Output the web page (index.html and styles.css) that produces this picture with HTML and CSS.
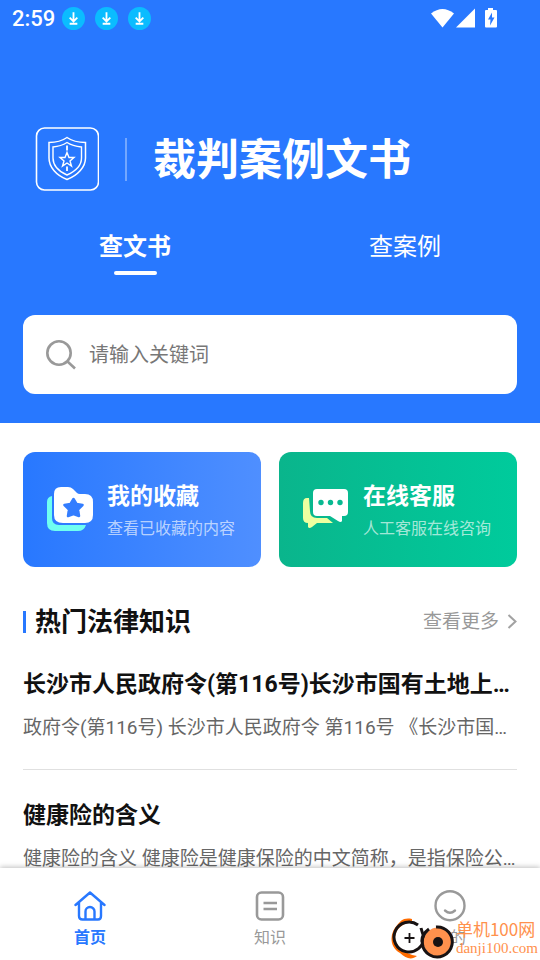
FILE: index.html
```html
<!DOCTYPE html>
<html lang="zh-CN">
<head>
<meta charset="utf-8">
<meta name="viewport" content="width=device-width, initial-scale=1">
<title>裁判案例文书</title>
<link rel="stylesheet" href="styles.css">
</head>
<body>
<svg class="defs" aria-hidden="true">
  <symbol id="download" viewBox="0 0 24 24">
    <circle cx="12" cy="12" r="12" fill="#0bbcff"/>
    <path d="M12 5.500v9M8 11l4 4 4-4M8 17.500h8" fill="none" stroke="#fff" stroke-width="1.900"/>
  </symbol>
</svg>
<header class="hero">
  <div class="status">
    <span class="clock">2:59</span>
    <svg class="dl" aria-hidden="true"><use href="#download"/></svg>
    <svg class="dl" aria-hidden="true"><use href="#download"/></svg>
    <svg class="dl" aria-hidden="true"><use href="#download"/></svg>
    <svg class="signals" viewBox="0 0 68 22" aria-hidden="true">
      <path d="M0 5.500Q11.500-3.500 23 5.500L11.500 19.500Z" fill="#fff"/>
      <path d="M44 .5v19H25Z" fill="#fff"/>
      <path fill-rule="evenodd" d="M57 0h5v2h3a1 1 0 0 1 1 1v15.500a1 1 0 0 1-1 1H55a1 1 0 0 1-1-1V3a1 1 0 0 1 1-1h2zM61 4.500l-4 7h2.500l-.500 6 4.500-8h-2.500z" fill="#fff"/>
    </svg>
  </div>
  <div class="brand">
    <svg class="logo" viewBox="0 0 64 64" fill="none" stroke="#fff" aria-hidden="true">
      <rect x="1.500" y="1" width="62" height="62" rx="8" stroke-width="1.600"/>
      <path d="M32 10.500C27 14 20 15.500 14 15.500V31C14 40 21 48 32 52.500 43 48 50.500 40 50.500 31V15.500C44 15.500 37 14 32 10.500Z" stroke-width="1.500"/>
      <path d="M32 15.500C28 18 23 19.500 18 20V31C18 38 23 44 32 48 41 44 46.500 38 46.500 31V20C42 19.500 36 18 32 15.500Z" stroke-width="1.400"/>
      <path d="M32 18.500v5M32 39.500v4.500" stroke-width="1.800"/>
      <path d="M32 25.500l2 5h5l-4 3.500 1.500 5L32 36 27.500 39 29 34 25 30.500h5z" stroke-width="1.400"/>
    </svg>
    <span class="rule"></span>
    <h1>裁判案例文书</h1>
  </div>
  <div class="tabs" role="tablist">
    <button class="tab active" role="tab" aria-selected="true">查文书</button>
    <button class="tab" role="tab" aria-selected="false">查案例</button>
  </div>
  <label class="search">
    <svg viewBox="0 0 30 30" aria-hidden="true"><g fill="none" stroke="#999" stroke-width="2.600"><circle cx="13" cy="13" r="11.700"/><path d="M21 21l8 7.500"/></g></svg>
    <input type="search" placeholder="请输入关键词" aria-label="请输入关键词">
  </label>
</header>
<main>
  <div class="cards">
    <a class="card favorites" href="#favorites">
      <svg viewBox="0 0 48 48" aria-hidden="true">
        <path d="M6 10Q1 11 1 16V37Q1 45 9 45H32Q38 45 40 39H13Q6 39 6 32Z" fill="#6ffff1"/>
        <path d="M15 1H22Q25 1 27 3L31 7Q32 8 34 8H39Q47 8 47 16V29Q47 37 39 37H17Q8 37 8 29V8Q8 1 15 1Z" fill="#fff"/>
        <path d="M27.500 13l3 5 6 1-4.500 4.500 1 6.500-5.500-2-5.500 2 1-6.500-4.500-4.500 6-1z" fill="#337dff" stroke="#337dff" stroke-width="2.500" stroke-linejoin="round"/>
      </svg>
      <span class="card-text"><strong>我的收藏</strong><small>查看已收藏的内容</small></span>
    </a>
    <a class="card support" href="#support">
      <svg viewBox="0 0 48 48" aria-hidden="true">
        <path d="M7 12H5Q1 12 1 17V32Q1 37 6 37V41Q7 43 10 41L15 37H31L25 32H15Q8 32 8 25Z" fill="#eeffa0"/>
        <path d="M15 3H42Q46 3 46 7V26Q46 30 42 30H40V35Q39 37 36 35L28 30H15Q11 30 11 26V7Q11 3 15 3Z" fill="#fff"/>
        <g fill="#08b991"><circle cx="19" cy="16.500" r="2.700"/><circle cx="28.500" cy="16.500" r="2.700"/><circle cx="38" cy="16.500" r="2.700"/></g>
      </svg>
      <span class="card-text"><strong>在线客服</strong><small>人工客服在线咨询</small></span>
    </a>
  </div>
  <div class="section-head">
    <h2>热门法律知识</h2>
    <a class="more" href="#more">查看更多
      <svg viewBox="0 0 10 16" aria-hidden="true"><path d="M1.500 1L8.500 7.500l-7 6.500" fill="none" stroke="#a2a2a2" stroke-width="2"/></svg>
    </a>
  </div>
  <article>
    <h3>长沙市人民政府令(第116号)长沙市国有土地上房屋征收与补偿实施办法</h3>
    <p>政府令(第116号) 长沙市人民政府令 第116号 《长沙市国有土地上房屋征收与补偿实施办法》</p>
  </article>
  <article>
    <h3>健康险的含义</h3>
    <p>健康险的含义 健康险是健康保险的中文简称，是指保险公司对被保险人的健康进行保障</p>
  </article>
</main>
<nav>
  <a class="current" href="#home">
    <svg viewBox="0 0 32 32" fill="none" stroke="currentColor" stroke-width="2.400" stroke-linecap="round" stroke-linejoin="round" aria-hidden="true"><path d="M1.500 15L16 2.500 30.500 15M5 12.500V26Q5 29.500 8.500 29.500H24Q27 29.500 27 26V12.500M11.500 29V21.500a4.500 4.500 0 0 1 9 0V29"/></svg>
    首页
  </a>
  <a href="#knowledge">
    <svg viewBox="0 0 32 32" fill="none" stroke="currentColor" stroke-width="2.600" aria-hidden="true"><rect x="3" y="2.500" width="26" height="27" rx="4.500"/><path d="M9.500 13h13.500M9.500 19h13.500"/></svg>
    知识
  </a>
  <a href="#mine">
    <svg viewBox="0 0 32 32" fill="none" stroke="currentColor" stroke-width="2.400" stroke-linecap="round" aria-hidden="true"><circle cx="16" cy="15.700" r="14.500"/><path d="M11 20.500Q16 25 21 20.500"/></svg>
    我的
  </a>
</nav>
<div class="watermark">
  <svg viewBox="0 0 64 44" aria-hidden="true">
    <path d="M21 3C12 1 9 6 7 8-2 17-2 31 9 37 15 43 21 44 26 40 1 36-2 12 21 5Z" fill="#ff6c00"/>
    <circle cx="18.500" cy="22" r="14.500" fill="#fff"/>
    <path d="M27 9A15 15 0 1 0 33 21Q31 16 30 12" fill="none" stroke="#171213" stroke-width="3"/>
    <path d="M13.500 22h10M18.500 17v10" stroke="#171213" stroke-width="1.800"/>
    <circle cx="47" cy="26" r="14.500" fill="#ff914d"/>
    <path d="M36 15A15 15 0 1 0 45 11M31 26Q30 19 38 13" fill="none" stroke="#171213" stroke-width="3"/>
    <circle cx="47" cy="26" r="5" fill="#171213"/>
  </svg>
  <span class="watermark-text"><b>单机100网</b><i>danji100.com</i></span>
</div>
</body>
</html>
```
FILE: styles.css
```css
* { box-sizing: border-box; }

body {
  margin: 0;
  height: 100vh;
  display: flex;
  flex-direction: column;
  overflow: hidden;
  background: #fff;
  color: #111;
  font-family: Roboto, "Noto Sans CJK SC", sans-serif;
}

h1, h2, h3, p { margin: 0; }
a { color: inherit; text-decoration: none; }
svg { display: block; flex: none; }
.defs { position: absolute; width: 0; height: 0; }

.hero {
  flex: none;
  padding-bottom: 29px;
  background: #2878ff;
  color: #fff;
}

.status {
  display: flex;
  align-items: center;
  height: 37px;
  padding: 0 41px 0 12px;
}
.clock { margin-right: 7px; font-size: 22px; font-weight: 500; line-height: 37px; }
.dl { width: 23px; height: 23px; margin-right: 10px; }
.signals { width: 68px; height: 22px; margin-left: auto; }

.brand {
  display: flex;
  align-items: center;
  margin-top: 89px;
  padding: 0 35px;
}
.logo { width: 64px; height: 64px; }
.rule { width: 2px; height: 43px; margin: 0 26px; background: rgba(255, 255, 255, .35); }
h1 { padding-top: 2px; font-size: 43px; line-height: 64px; font-weight: 700; }

.tabs { display: flex; margin-top: 34px; }
.tab {
  flex: 1;
  display: flex;
  flex-direction: column;
  align-items: center;
  height: 49px;
  padding: 0;
  border: 0;
  background: none;
  color: #fff;
  font: 400 24px/42px Roboto, "Noto Sans CJK SC", sans-serif;
}
.tab.active { font-weight: 700; }
.tab.active::after {
  content: "";
  width: 43px;
  height: 4px;
  margin-top: 3px;
  border-radius: 2px;
  background: #fff;
}

.search {
  display: flex;
  align-items: center;
  gap: 13px;
  height: 79px;
  margin: 40px 23px 0;
  padding: 0 23px;
  border-radius: 12px;
  background: #fff;
}
.search svg { width: 30px; height: 30px; }
.search input {
  flex: 1;
  min-width: 0;
  padding: 0;
  border: 0;
  outline: 0;
  background: none;
  color: #111;
  font: 400 20px/30px Roboto, "Noto Sans CJK SC", sans-serif;
}
.search input::placeholder { color: #777; }

main {
  flex: 1;
  min-height: 0;
  overflow: hidden;
  padding: 29px 23px 0;
}

.cards { display: grid; grid-template-columns: 1fr 1fr; gap: 18px; }
.card {
  display: flex;
  align-items: center;
  gap: 13px;
  height: 115px;
  padding: 0 23px;
  border-radius: 12px;
  color: #fff;
  white-space: nowrap;
}
.card svg { width: 48px; height: 48px; }
.favorites { background: linear-gradient(90deg, #2878ff, #4f8fff); }
.support { background: linear-gradient(90deg, #0ab58c, #00cb9c); }
.card-text { display: flex; flex-direction: column; padding-top: 2px; }
.card strong { font-size: 23px; line-height: 36px; }
.card small { font-size: 16px; line-height: 28px; color: rgba(255, 255, 255, .65); }

.section-head {
  display: flex;
  align-items: center;
  justify-content: space-between;
  margin-top: 35px;
  line-height: 40px;
}
h2 { display: flex; align-items: center; gap: 9px; font-size: 26px; font-weight: 700; }
h2::before { content: ""; width: 3px; height: 22px; background: #2878ff; }
.more { display: flex; align-items: center; gap: 8px; color: #999; font-size: 19px; }
.more svg { width: 10px; height: 16px; }

article { padding: 24px 0; border-bottom: 1px solid #e0e0e0; }
.section-head + article { padding-top: 23px; }
article + article { padding-top: 26px; }
h3, article p { overflow: hidden; white-space: nowrap; text-overflow: ellipsis; }
h3 { font-size: 23px; line-height: 40px; font-weight: 700; }
article p { margin-top: 6px; font-size: 19px; line-height: 34px; color: #666; }

nav {
  position: relative;
  flex: none;
  display: grid;
  grid-template-columns: repeat(3, 1fr);
  height: 92px;
  padding-top: 22px;
  background: #fff;
  box-shadow: 0 -1px 5px rgba(0, 0, 0, .25);
}
nav a {
  display: flex;
  flex-direction: column;
  align-items: center;
  color: #999;
  font-size: 16px;
  line-height: 32px;
}
nav svg { width: 32px; height: 32px; }
nav .current { color: #2878ff; font-weight: 700; }

.watermark {
  position: absolute;
  right: 2px;
  bottom: 0;
  display: flex;
  align-items: center;
  gap: 1px;
  color: #ff914d;
}
.watermark svg { width: 64px; height: 44px; }
.watermark-text { display: flex; flex-direction: column; }
.watermark b { font: 400 17px/20px "Noto Sans CJK SC", sans-serif; }
.watermark i { font: 400 15px/18px "Liberation Serif", serif; }
```
